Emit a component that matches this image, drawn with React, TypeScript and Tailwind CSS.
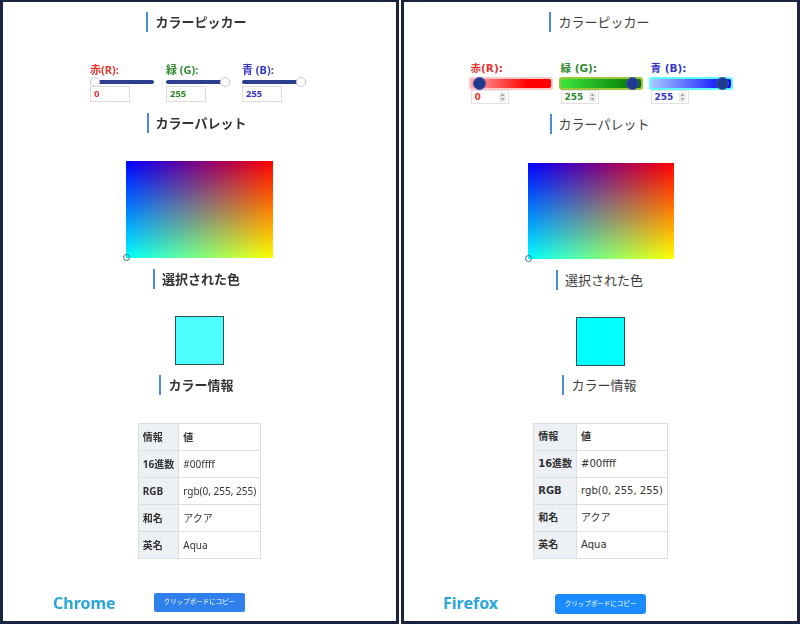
import React from "react";

type Channel = {
  key: string;
  label: string;
  value: number;
  text: string;
  glow: string;
  bar: string;
};

const CHANNELS: Channel[] = [
  {
    key: "r",
    label: "赤(R):",
    value: 0,
    text: "text-[#e3342f]",
    glow: "bg-[#ffc8c8]",
    bar: "bg-[linear-gradient(to_right,#ffa8a8,#ff0000_70%)]",
  },
  {
    key: "g",
    label: "緑 (G):",
    value: 255,
    text: "text-[#2f8a2f]",
    glow: "bg-[#9dc53c]",
    bar: "bg-[linear-gradient(to_right,#3be63b,#007000)]",
  },
  {
    key: "b",
    label: "青 (B):",
    value: 255,
    text: "text-[#3535c8]",
    glow: "bg-[#5cffff]",
    bar: "bg-[linear-gradient(to_right,#a8c6ff,#0000ff)]",
  },
];

const ROWS: [string, string][] = [
  ["情報", "値"],
  ["16進数", "#00ffff"],
  ["RGB", "rgb(0, 255, 255)"],
  ["和名", "アクア"],
  ["英名", "Aqua"],
];

function Palette({ size }: { size: string }) {
  return (
    <div className={`relative ${size} bg-[linear-gradient(to_right,#0000ff,#ff0000)]`}>
      <div className="absolute inset-0 bg-[linear-gradient(to_bottom,#000000,#00ff00)] mix-blend-screen" />
      <span className="absolute -bottom-[3px] -left-[3px] h-[7px] w-[7px] rounded-full border-[1.5px] border-[#2b7272]" />
    </div>
  );
}

function InfoTable({ cell }: { cell: string }) {
  return (
    <table className="border-collapse">
      <tbody>
        {ROWS.map(([k, v], i) => (
          <tr key={k} className="h-[27px]">
            <td className={`${cell} bg-[#edf1f5] font-bold`}>{k}</td>
            <td className={`${cell} bg-white ${i === 0 ? "font-bold" : ""}`}>{v}</td>
          </tr>
        ))}
      </tbody>
    </table>
  );
}

function ChromeSlider({ value }: { value: number }) {
  return (
    <div className="relative h-[10px] w-[64px]">
      <div className="absolute left-0 right-0 top-[3px] h-[4px] rounded-full bg-[#2c3f8e]" />
      <span
        className="absolute top-0 h-[10px] w-[10px] rounded-full border border-[#cfcfcf] bg-white"
        style={{ left: (value / 255) * 54 }}
      />
    </div>
  );
}

function FirefoxSlider({ c }: { c: Channel }) {
  return (
    <div className={`relative h-[13px] w-[84px] rounded-[3px] p-[2px] ${c.glow}`}>
      <div className={`h-full w-full rounded-[2px] ${c.bar}`} />
      <span
        className="absolute top-0 h-[13px] w-[13px] rounded-full border border-[#3b55a8] bg-[#1f3a8f]"
        style={{ left: 4 + (c.value / 255) * 63 }}
      />
    </div>
  );
}

function Spinner() {
  return (
    <svg width="7" height="10" viewBox="0 0 7 10">
      <rect x="0" y="0" width="7" height="10" rx="1" fill="#ececec" />
      <path d="M3.5 1.5 L5.5 4 L1.5 4 Z" fill="#a0a0a0" />
      <path d="M3.5 8.5 L5.5 6 L1.5 6 Z" fill="#a0a0a0" />
    </svg>
  );
}

function ChromePanel() {
  const heading =
    "mr-[6px] border-l-2 border-[#4a8edb] pl-[7px] text-[13px] font-bold leading-[20px] text-[#333]";
  return (
    <section className="relative flex h-full w-[399px] flex-col items-center border-[3px] border-t-2 border-[#1b2340] bg-white font-['Noto_Sans','Noto_Sans_CJK_JP',sans-serif]">
      <h2 className={`mt-[10px] ${heading}`}>カラーピッカー</h2>

      <div className="mt-[31px] mr-[3px] flex gap-[12px]">
        {CHANNELS.map((c) => (
          <div key={c.key} className="flex w-[64px] flex-col">
            <span className={`text-[11px] font-bold leading-[14px] ${c.text}`}>{c.label}</span>
            <ChromeSlider value={c.value} />
            <div className="-mt-px flex h-[16px] w-[40px] items-center border border-[#dcdcdc] bg-white pl-[3px]">
              <span className={`text-[9.5px] font-bold leading-none ${c.text}`}>{c.value}</span>
            </div>
          </div>
        ))}
      </div>

      <h2 className={`mt-[11px] ${heading}`}>カラーパレット</h2>
      <div className="mt-[28px]">
        <Palette size="h-[97px] w-[147px]" />
      </div>

      <h2 className={`mt-[11px] ${heading}`}>選択された色</h2>
      <div className="mt-[27px] h-[49px] w-[49px] border border-[#2f5050] bg-[#4dffff]" />

      <h2 className={`mt-[10px] ${heading}`}>カラー情報</h2>
      <div className="mt-[28px]">
        <InfoTable cell="border border-[#dedede] px-1 text-[10px] leading-none text-[#333]" />
      </div>

      <button className="mt-[34px] h-[19px] w-[91px] rounded-[2px] bg-[#2f80ed] text-[6.5px] leading-none text-white">
        クリップボードにコピー
      </button>

      <span className="absolute left-[50px] top-[591px] text-[16px] font-bold leading-[20px] text-[#2ba6dc]">
        Chrome
      </span>
    </section>
  );
}

function FirefoxPanel() {
  const heading =
    "mr-[2px] border-l-2 border-[#4a8edb] pl-[7px] text-[13px] leading-[20px] text-[#404040] font-['Noto_Sans_CJK_JP',sans-serif]";
  return (
    <section className="relative flex h-full w-[399px] flex-col items-center border-[3px] border-t-2 border-[#1b2340] bg-white font-['DejaVu_Sans','Noto_Sans_CJK_JP',sans-serif]">
      <h2 className={`mt-[10px] ${heading}`}>カラーピッカー</h2>

      <div className="mt-[29px] flex gap-[6px]">
        {CHANNELS.map((c) => (
          <div key={c.key} className="flex w-[84px] flex-col">
            <span className={`pl-[2px] text-[10.5px] font-bold leading-[14px] ${c.text}`}>{c.label}</span>
            <div className="mt-[2px]">
              <FirefoxSlider c={c} />
            </div>
            <div className="ml-[2px] flex h-[14px] w-[38px] items-center justify-between border border-[#e2e2e2] bg-white pl-[3px] pr-[2px]">
              <span className={`text-[9px] font-bold leading-none ${c.text}`}>{c.value}</span>
              <Spinner />
            </div>
          </div>
        ))}
      </div>

      <h2 className={`mt-[10px] ${heading}`}>カラーパレット</h2>
      <div className="mt-[29px]">
        <Palette size="h-[96px] w-[146px]" />
      </div>

      <h2 className={`mt-[11px] ${heading}`}>選択された色</h2>
      <div className="mt-[27px] h-[49px] w-[49px] border border-[#2f5050] bg-[#00ffff]" />

      <h2 className={`mt-[9px] ${heading}`}>カラー情報</h2>
      <div className="mt-[28px]">
        <InfoTable cell="border border-[#dedede] px-1 text-[10px] leading-none text-[#333]" />
      </div>

      <button className="mt-[35px] h-[20px] w-[91px] rounded-[3px] bg-[#1a8cff] text-[6.5px] leading-none text-white">
        クリップボードにコピー
      </button>

      <span className="absolute left-[39px] top-[591px] font-['Noto_Sans',sans-serif] text-[16px] font-bold leading-[20px] text-[#2ba6dc]">
        Firefox
      </span>
    </section>
  );
}

export default function App() {
  return (
    <div className="flex h-[624px] w-[800px] gap-[2px] bg-white">
      <ChromePanel />
      <FirefoxPanel />
    </div>
  );
}
